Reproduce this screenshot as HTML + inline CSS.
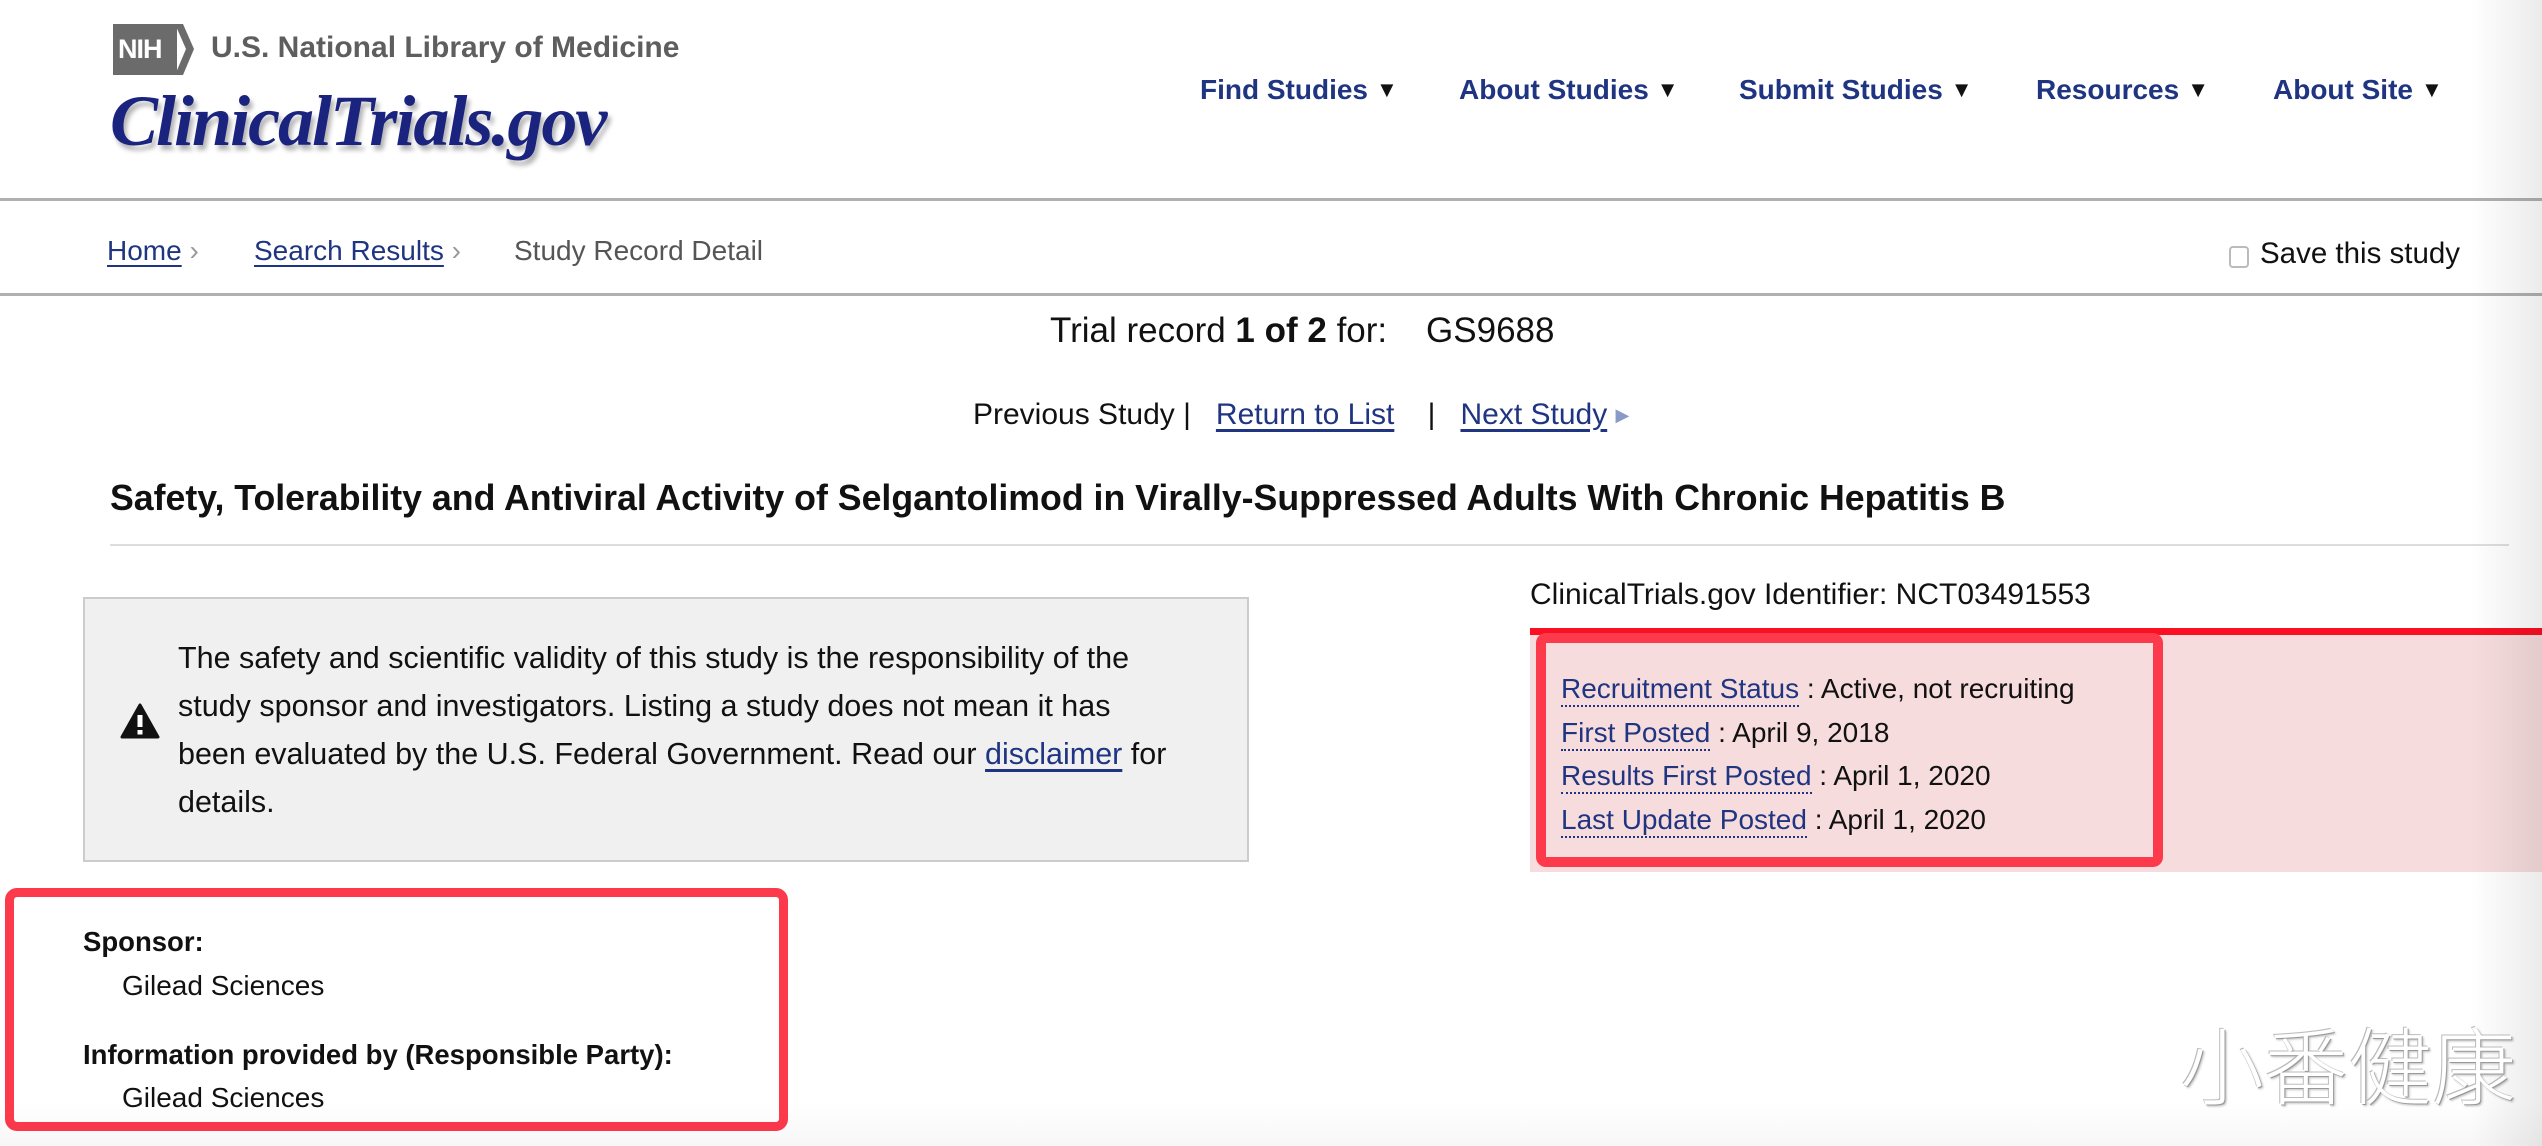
<!DOCTYPE html>
<html><head><meta charset="utf-8"><style>
*{margin:0;padding:0;box-sizing:border-box}
body{width:2542px;height:1146px;position:relative;overflow:hidden;background:#fff;font-family:"Liberation Sans",Arial,sans-serif;color:#111}
.a{position:absolute;white-space:nowrap}
.nav{font-size:28px;font-weight:bold;color:#1f3581;top:74px}
.nav span{font-size:22px;margin-left:8px;color:#111;vertical-align:2px}
.lnk{color:#1f3581;text-decoration:underline;text-underline-offset:5px}
.dot{color:#1f3581;border-bottom:2px dotted #1f3581;padding-bottom:1px}
.t28{font-size:28px}
</style></head><body>
<!-- header -->
<div class="a" style="left:113px;top:24px;width:64px;height:51px;background:#6b6b6b;color:#fff;font-size:27px;font-weight:bold;line-height:51px;padding-left:5px;letter-spacing:-1px">NIH</div>
<svg class="a" style="left:175px;top:24px" width="20" height="51"><polygon points="0,0 8,0 19,25 8,51 0,51 11,25" fill="#6b6b6b"/></svg>
<div class="a" style="left:211px;top:31px;font-size:30px;font-weight:bold;color:#5e5e5e">U.S. National Library of Medicine</div>
<div class="a" style="left:110px;top:80px;font-family:'Liberation Serif',serif;font-style:italic;font-weight:bold;font-size:72px;color:#1a237e;letter-spacing:-2px;text-shadow:3px 5px 5px rgba(0,0,0,.3)">ClinicalTrials.gov</div>
<div class="a nav" style="left:1200px">Find Studies<span>▼</span></div>
<div class="a nav" style="left:1459px">About Studies<span>▼</span></div>
<div class="a nav" style="left:1739px">Submit Studies<span>▼</span></div>
<div class="a nav" style="left:2036px">Resources<span>▼</span></div>
<div class="a nav" style="left:2273px">About Site<span>▼</span></div>
<div class="a" style="left:0;top:198px;width:2542px;height:3px;background:#b0b0b0"></div>
<!-- breadcrumb -->
<div class="a t28" style="left:107px;top:235px"><span class="lnk">Home</span> <span style="color:#999">›</span></div>
<div class="a t28" style="left:254px;top:235px"><span class="lnk">Search Results</span> <span style="color:#999">›</span></div>
<div class="a t28" style="left:514px;top:235px;color:#555">Study Record Detail</div>
<div class="a" style="left:2229px;top:246px;width:20px;height:22px;border:2px solid #bbb;border-radius:4px"></div>
<div class="a" style="left:2260px;top:237px;font-size:29.5px">Save this study</div>
<div class="a" style="left:0;top:293px;width:2542px;height:3px;background:#b0b0b0"></div>
<!-- trial record -->
<div class="a" style="left:1050px;top:311px;font-size:35px">Trial record <b>1 of 2</b> for: &nbsp;&nbsp;&nbsp;GS9688</div>
<div class="a" style="left:973px;top:398px;font-size:30px">Previous Study | &nbsp;&nbsp;<span class="lnk">Return to List</span> &nbsp;&nbsp;&nbsp;| &nbsp;&nbsp;<span class="lnk">Next Study</span> <span style="color:#8a9ac8;font-size:18px;vertical-align:3px">▶</span></div>
<div class="a" style="left:110px;top:478px;font-size:35.7px;font-weight:bold">Safety, Tolerability and Antiviral Activity of Selgantolimod in Virally-Suppressed Adults With Chronic Hepatitis B</div>
<div class="a" style="left:110px;top:544px;width:2399px;height:2px;background:#ddd"></div>
<!-- disclaimer -->
<div class="a" style="left:83px;top:597px;width:1166px;height:265px;background:#f0f0f0;border:2px solid #ccc"></div>
<svg class="a" style="left:120px;top:703px" width="40" height="36" viewBox="0 0 40 36"><path d="M20 2 L38 34 H2 Z" fill="#111" stroke="#111" stroke-width="3" stroke-linejoin="round"/><rect x="17.5" y="12" width="5" height="12" fill="#fff"/><rect x="17.5" y="27" width="5" height="4.5" fill="#fff"/></svg>
<div class="a" style="left:178px;top:634px;font-size:30.5px;line-height:48px">The safety and scientific validity of this study is the responsibility of the<br>study sponsor and investigators. Listing a study does not mean it has<br>been evaluated by the U.S. Federal Government. Read our <span class="lnk">disclaimer</span> for<br>details.</div>
<!-- sponsor -->
<div class="a" style="left:5px;top:888px;width:783px;height:243px;border:9px solid #fd3a4c;border-radius:12px"></div>
<div class="a" style="left:83px;top:926px;font-size:27.5px;font-weight:bold">Sponsor:</div>
<div class="a" style="left:122px;top:970px;font-size:28px">Gilead Sciences</div>
<div class="a" style="left:83px;top:1039px;font-size:27.5px;font-weight:bold">Information provided by (Responsible Party):</div>
<div class="a" style="left:122px;top:1082px;font-size:28px">Gilead Sciences</div>
<!-- identifier -->
<div class="a" style="left:1530px;top:578px;font-size:30px">ClinicalTrials.gov Identifier: NCT03491553</div>
<div class="a" style="left:1530px;top:628px;width:1012px;height:7px;background:#fb0f22"></div>
<div class="a" style="left:1530px;top:635px;width:1012px;height:237px;background:#f6dcdd"></div>
<div class="a" style="left:1536px;top:633px;width:627px;height:234px;border:10px solid #fd3a4c;border-radius:10px"></div>
<div class="a t28" style="left:1561px;top:673px"><span class="dot">Recruitment Status</span> : Active, not recruiting</div>
<div class="a t28" style="left:1561px;top:717px"><span class="dot">First Posted</span> : April 9, 2018</div>
<div class="a t28" style="left:1561px;top:760px"><span class="dot">Results First Posted</span> : April 1, 2020</div>
<div class="a t28" style="left:1561px;top:804px"><span class="dot">Last Update Posted</span> : April 1, 2020</div>
<!-- right shading -->
<div class="a" style="left:2470px;top:0;width:72px;height:1146px;background:linear-gradient(90deg,rgba(0,0,0,0),rgba(0,0,0,.08))"></div>
<div class="a" style="left:0;top:1100px;width:2542px;height:46px;background:linear-gradient(180deg,rgba(0,0,0,0),rgba(0,0,0,.03))"></div>
<!-- watermark -->
<div class="a" style="left:2180px;top:1002px;font-family:'Noto Sans CJK SC',sans-serif;font-size:84px;font-weight:300;color:#fff;text-shadow:1px 1px 0 #999,-1px -1px 0 #bbb,2px 2px 2px rgba(0,0,0,.25)">小番健康</div>
</body></html>
